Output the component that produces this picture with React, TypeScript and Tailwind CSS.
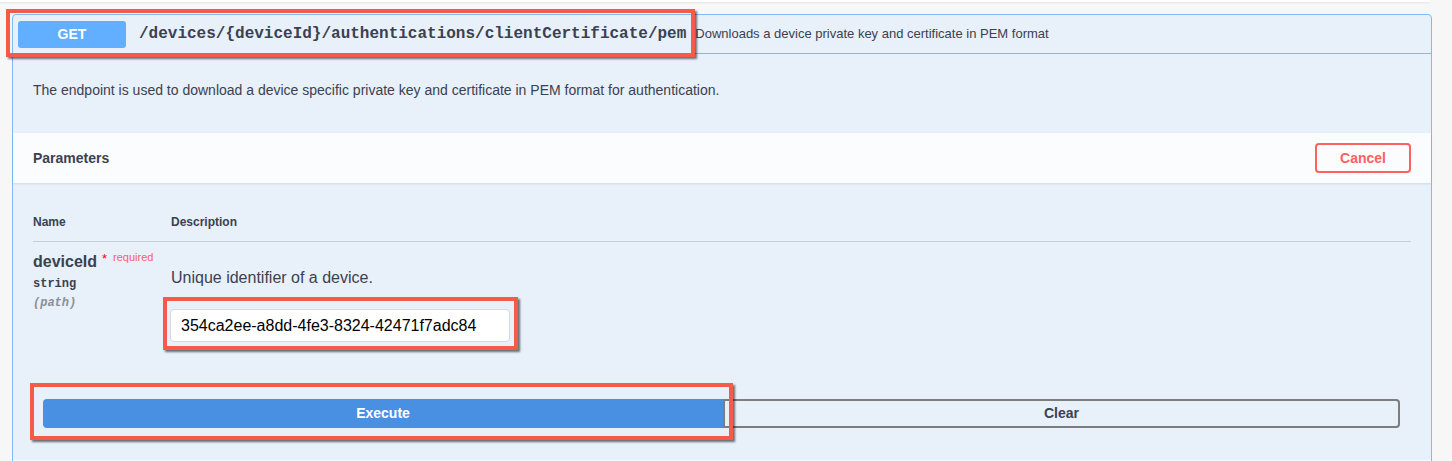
const SANS = "font-['Liberation_Sans',Arial,sans-serif]";
const MONO = "font-['Liberation_Mono','Courier_New',monospace]";

function Annotation({ className }: { className: string }) {
  return (
    <div
      className={`pointer-events-none absolute border-4 border-[#f65a4b] shadow-[2px_2px_2px_rgba(0,0,0,0.55)] ${className}`}
    />
  );
}

export default function App() {
  return (
    <div className={`relative h-[461px] w-[1452px] overflow-hidden bg-[#f7f7f7] text-[#3b4151] ${SANS}`}>
      <div className="h-[2px] w-[1430px] bg-white shadow-[0_1px_2px_rgba(0,0,0,0.08)]" />

      <div className="ml-[12px] mt-[12px] w-[1420px] rounded-t-[4px] border border-[#7fbaf7] bg-[#e8f0f9]">
        {/* summary */}
        <div className="flex h-[39px] items-center border-b border-[#7fbaf7] px-[5px]">
          <div className="flex h-[27px] w-[108px] items-center justify-center rounded-[3px] bg-[#61affe] text-[14px] font-bold text-white">
            GET
          </div>
          <span className={`ml-[13px] text-[16px] font-bold ${MONO}`}>
            /devices/{"{deviceId}"}/authentications/clientCertificate/pem
          </span>
          <span className="ml-[9px] text-[13px]">
            Downloads a device private key and certificate in PEM format
          </span>
        </div>

        {/* description */}
        <div className="flex h-[79px] items-center px-[20px] pb-[6px] text-[14px]">
          The endpoint is used to download a device specific private key and certificate in PEM format for
          authentication.
        </div>

        {/* parameters header */}
        <div className="flex h-[50px] items-center justify-between bg-[#fbfcfe] pl-[20px] pr-[20px] shadow-[0_1px_2px_rgba(0,0,0,0.1)]">
          <span className="text-[14px] font-bold">Parameters</span>
          <button className="h-[30px] w-[96px] rounded-[4px] border-2 border-[#ff6060] bg-transparent text-[14px] font-bold text-[#ff6060]">
            Cancel
          </button>
        </div>

        {/* parameters body */}
        <div className="px-[20px] pt-[31px]">
          <div className="flex border-b border-[#c9cfd8] pb-[11px] text-[12px] font-bold leading-[16px]">
            <div className="w-[138px]">Name</div>
            <div>Description</div>
          </div>

          <div className="flex">
            <div className="w-[138px] pt-[10px]">
              <div className="flex items-start">
                <span className="text-[16px] font-bold leading-[20px]">deviceId</span>
                <span className="ml-[5px] text-[13px] leading-[14px] text-[#ff0000]">*</span>
                <span className="ml-[6px] text-[11px] leading-[10px] text-[#ff6060]">required</span>
              </div>
              <div className={`mt-[5px] text-[12px] font-bold leading-[14px] ${MONO}`}>string</div>
              <div className={`mt-[5px] text-[12px] font-bold italic leading-[14px] text-[#8a8f99] ${MONO}`}>
                (path)
              </div>
            </div>
            <div className="pt-[26px]">
              <div className="text-[16px] leading-[20px]">Unique identifier of a device.</div>
              <input
                readOnly
                value="354ca2ee-a8dd-4fe3-8324-42471f7adc84"
                className="ml-[-1px] mt-[21px] h-[33px] w-[340px] rounded-[4px] border border-[#d9d9d9] bg-white px-[10px] text-[16px] text-black outline-none"
              />
            </div>
          </div>

          <div className="ml-[10px] mr-[11px] mt-[57px] flex">
            <button className="h-[29px] w-[680px] rounded-l-[4px] bg-[#4990e2] text-[14px] font-bold text-white">
              Execute
            </button>
            <button className="h-[29px] flex-1 rounded-r-[4px] border-2 border-[#7d7d7d] bg-transparent text-[14px] font-bold">
              Clear
            </button>
          </div>
          <div className="h-[32px]" />
        </div>
        <div className="h-[10px] bg-[#f9fbfe]" />
      </div>

      <Annotation className="left-[6px] top-[9px] h-[48px] w-[689px]" />
      <Annotation className="left-[163px] top-[297px] h-[53px] w-[355px]" />
      <Annotation className="left-[30px] top-[383px] h-[57px] w-[703px]" />
    </div>
  );
}
